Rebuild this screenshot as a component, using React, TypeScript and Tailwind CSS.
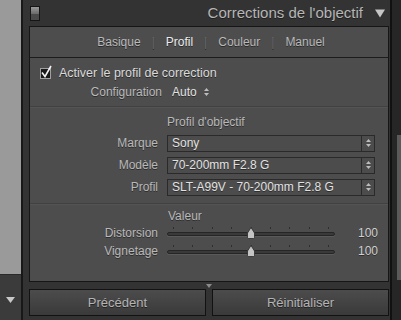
import React from "react";

const font = { fontFamily: '"Liberation Sans", Arial, sans-serif' };

function Spinner() {
  return (
    <svg width="7" height="10" viewBox="0 0 7 10">
      <path d="M3.5 1 L6 4 H1 Z" fill="#bdbdbd" />
      <path d="M3.5 9 L6 6 H1 Z" fill="#bdbdbd" />
    </svg>
  );
}

function Select({ value }: { value: string }) {
  return (
    <div className="flex h-[17px] w-[208px] items-stretch border border-[#2a2a2a] bg-[#4c4c4c]">
      <div className="flex flex-1 items-center pl-[4px] text-[12px] text-[#e2e2e2] [text-shadow:0_1px_0_#2e2e2e]">
        {value}
      </div>
      <div className="flex w-[13px] items-center justify-center border-l border-[#2a2a2a]">
        <Spinner />
      </div>
    </div>
  );
}

function Slider() {
  const ticks = [0, 1, 2, 3, 4, 5, 6, 7, 8];
  return (
    <div className="relative h-[14px] w-[168px]">
      {ticks.map((i) => (
        <div
          key={i}
          className="absolute top-[1px] h-[2px] w-[1px] bg-[#2e2e2e]"
          style={{ left: 6 + i * 19.4 }}
        />
      ))}
      <div className="absolute left-0 right-0 top-[6px] h-[4px] rounded-full border border-[#262626] bg-[#3a3a3a] shadow-[0_1px_0_#5a5a5a]" />
      <svg className="absolute left-[79px] top-[1px]" width="10" height="12" viewBox="0 0 10 12">
        <path d="M5 0.5 L8.5 6 L8.5 10.5 Q8.5 11.5 7.5 11.5 H2.5 Q1.5 11.5 1.5 10.5 L1.5 6 Z" fill="#c4c4c4" stroke="#2a2a2a" strokeWidth="0.8" />
      </svg>
    </div>
  );
}

function Row({ label, children }: { label: string; children: React.ReactNode }) {
  return (
    <div className="flex items-center">
      <div className="w-[128px] text-right text-[12px] text-[#b9b9b9] [text-shadow:0_1px_0_#2e2e2e]">{label}</div>
      <div className="ml-[9px]">{children}</div>
    </div>
  );
}

export default function App() {
  return (
    <div className="flex h-[320px] w-[401px] overflow-hidden bg-[#333]" style={font}>
      {/* left strip */}
      <div className="flex w-[21px] flex-col">
        <div className="h-[274px] bg-[#9a9a9a]" />
        <div className="h-[1px] bg-[#2a2a2a]" />
        <div className="flex flex-1 items-start justify-center bg-[#3b3b3b] pt-[22px]">
          <svg width="9" height="6" viewBox="0 0 9 6">
            <path d="M0 0 H9 L4.5 6 Z" fill="#c8c8c8" />
          </svg>
        </div>
      </div>
      <div className="w-[2px] bg-[#181818]" />

      {/* main panel */}
      <div className="flex w-[367px] flex-col bg-[#333]">
        {/* header */}
        <div className="flex h-[26px] items-center pl-[7px] pr-[5px]">
          <div className="flex h-[15px] w-[10px] flex-col overflow-hidden border border-[#151515]">
            <div className="h-[7px] bg-gradient-to-b from-[#9a9a9a] to-[#6a6a6a]" />
            <div className="flex-1 bg-[#4a4a4a]" />
          </div>
          <div className="flex-1" />
          <div className="text-[15px] text-[#b6b6b6] [text-shadow:0_1px_0_#1e1e1e]">Corrections de l'objectif</div>
          <svg className="ml-[12px]" width="10" height="9" viewBox="0 0 10 9">
            <path d="M0 0.5 H10 L5 8.5 Z" fill="#c6c6c6" />
          </svg>
        </div>

        {/* box */}
        <div className="ml-[6px] mr-[1px] flex h-[256px] flex-col border border-[#161616] bg-[#4d4d4d]">
          {/* tabs */}
          <div className="flex h-[31px] items-center justify-center gap-[11px] border-b border-[#1c1c1c] pl-[4px] text-[12px] text-[#b9b9b9] [text-shadow:0_1px_0_#2a2a2a]">
            <span>Basique</span>
            <span className="text-[#6a6a6a]">|</span>
            <span className="text-[#ececec]">Profil</span>
            <span className="text-[#6a6a6a]">|</span>
            <span>Couleur</span>
            <span className="text-[#6a6a6a]">|</span>
            <span>Manuel</span>
          </div>

          {/* checkbox row */}
          <div className="mt-[8px] flex h-[14px] items-center pl-[10px]">
            <div className="relative h-[11px] w-[11px] border border-[#a0a0a0] bg-[#1a1a1a]">
              <svg className="absolute -left-[1px] -top-[4px]" width="13" height="14" viewBox="0 0 13 14">
                <path d="M2 7.5 L5 11.5 L11 1" fill="none" stroke="#f2f2f2" strokeWidth="1.6" />
              </svg>
            </div>
            <span className="ml-[8px] text-[12.5px] text-[#dadada] [text-shadow:0_1px_0_#2a2a2a]">Activer le profil de correction</span>
          </div>

          {/* configuration */}
          <div className="mt-[5px] flex h-[14px] items-center">
            <div className="w-[132px] text-right text-[12px] text-[#b9b9b9] [text-shadow:0_1px_0_#2e2e2e]">Configuration</div>
            <span className="ml-[10px] text-[12px] text-[#e2e2e2] [text-shadow:0_1px_0_#2e2e2e]">Auto</span>
            <span className="ml-[6px] flex items-center"><Spinner /></span>
          </div>

          <div className="mt-[7px] h-[1px] bg-[#414141] shadow-[0_1px_0_#545454]" />

          <div className="mt-[8px] flex h-[14px] items-center pl-[137px] text-[12px] text-[#b9b9b9] [text-shadow:0_1px_0_#2e2e2e]">Profil d'objectif</div>

          <div className="mt-[5px] flex flex-col gap-[4px]">
            <Row label="Marque"><Select value="Sony" /></Row>
            <Row label="Modèle"><Select value="70-200mm F2.8 G" /></Row>
            <Row label="Profil"><Select value="SLT-A99V - 70-200mm F2.8 G" /></Row>
          </div>

          <div className="mt-[7px] h-[1px] bg-[#414141] shadow-[0_1px_0_#545454]" />

          <div className="mt-[5px] flex h-[14px] items-center pl-[138px] text-[12px] text-[#b9b9b9] [text-shadow:0_1px_0_#2e2e2e]">Valeur</div>

          <div className="mt-[3px] flex flex-col gap-[4px]">
            {["Distorsion", "Vignetage"].map((l) => (
              <div key={l} className="flex h-[14px] items-center">
                <div className="w-[128px] text-right text-[12px] text-[#b9b9b9] [text-shadow:0_1px_0_#2e2e2e]">{l}</div>
                <div className="ml-[9px]"><Slider /></div>
                <div className="ml-[23px] text-[12px] text-[#d0d0d0] [text-shadow:0_1px_0_#2e2e2e]">100</div>
              </div>
            ))}
          </div>
        </div>

        {/* small triangle */}
        <div className="flex h-[7px] items-center justify-center pl-[5px]">
          <svg width="6" height="4" viewBox="0 0 6 4">
            <path d="M0 0 H6 L3 4 Z" fill="#8a8a8a" />
          </svg>
        </div>

        {/* buttons */}
        <div className="ml-[6px] mr-[1px] flex gap-[6px]">
          {["Précédent", "Réinitialiser"].map((b) => (
            <div
              key={b}
              className="flex h-[27px] flex-1 items-center justify-center border border-[#121212] bg-gradient-to-b from-[#4c4c4c] to-[#3a3a3a] text-[13px] text-[#b4b4b4] [text-shadow:0_1px_0_#222]"
            >
              {b}
            </div>
          ))}
        </div>
      </div>

      {/* right column */}
      <div className="flex flex-1 border-l-[2px] border-[#111] bg-[#262626]">
        <div className="flex-1" />
        <div className="mt-[135px] h-[145px] w-[4px] bg-[#5a5a5a]" />
      </div>
    </div>
  );
}
